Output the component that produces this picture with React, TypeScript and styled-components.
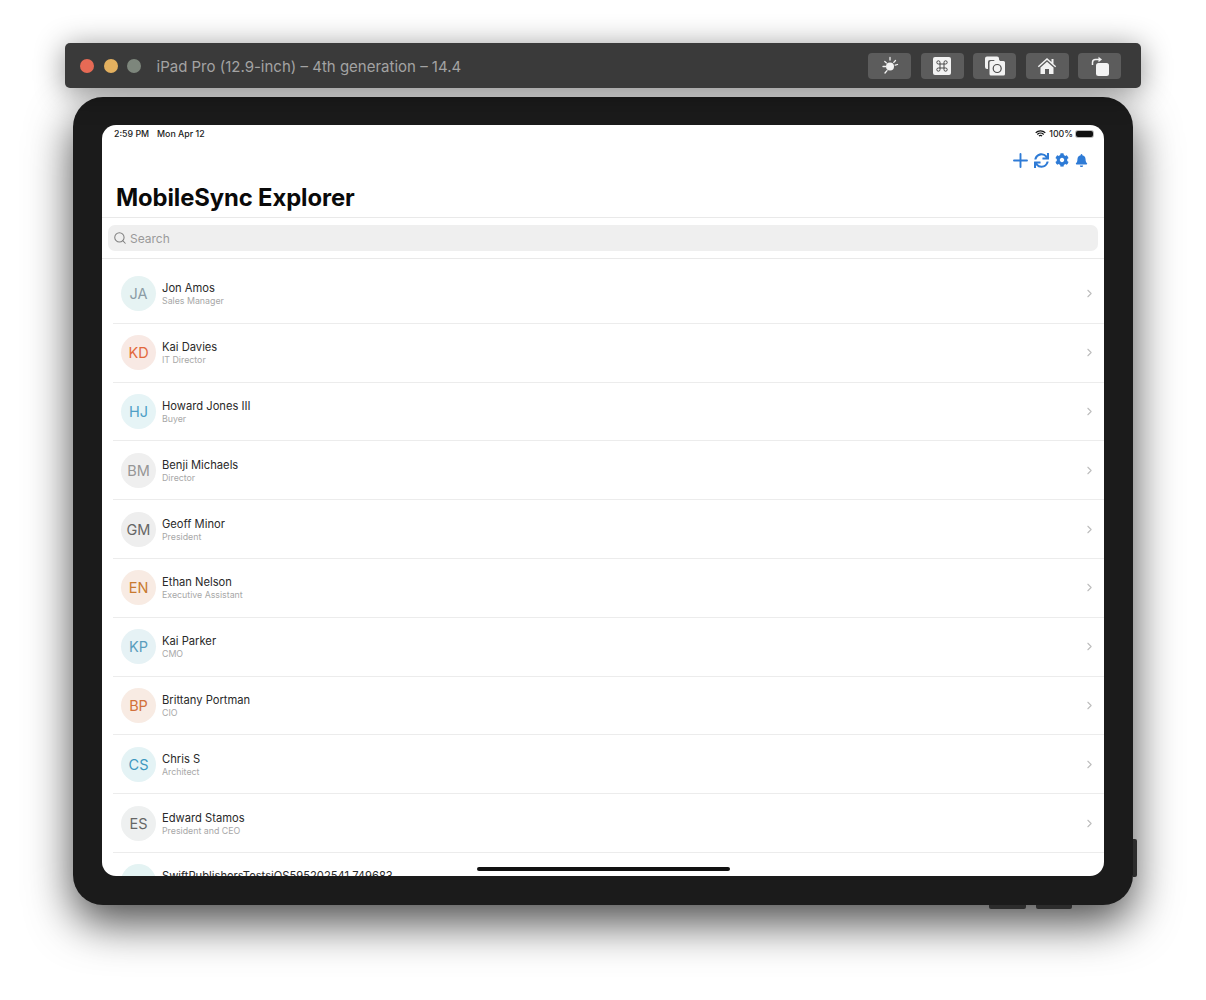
import React from 'react';
import styled, { createGlobalStyle } from 'styled-components';
import { FaBell, FaCog, FaSync } from 'react-icons/fa';
import { ChevronRight, Search } from 'lucide-react';

const contacts = [
  { initials: 'JA', name: 'Jon Amos', title: 'Sales Manager', bg: '#e6f3f3', fg: '#8b9ca6' },
  { initials: 'KD', name: 'Kai Davies', title: 'IT Director', bg: '#f8e9e4', fg: '#e2683c' },
  { initials: 'HJ', name: 'Howard Jones III', title: 'Buyer', bg: '#e6f4f6', fg: '#4f9fc6' },
  { initials: 'BM', name: 'Benji Michaels', title: 'Director', bg: '#efefef', fg: '#969696' },
  { initials: 'GM', name: 'Geoff Minor', title: 'President', bg: '#eeeeee', fg: '#666666' },
  { initials: 'EN', name: 'Ethan Nelson', title: 'Executive Assistant', bg: '#f8ebe3', fg: '#c87a30' },
  { initials: 'KP', name: 'Kai Parker', title: 'CMO', bg: '#e6f2f5', fg: '#5a9dbd' },
  { initials: 'BP', name: 'Brittany Portman', title: 'CIO', bg: '#f8ebe3', fg: '#d2703a' },
  { initials: 'CS', name: 'Chris S', title: 'Architect', bg: '#e4f3f5', fg: '#3e98c0' },
  { initials: 'ES', name: 'Edward Stamos', title: 'President and CEO', bg: '#eef0f0', fg: '#666666' },
  { initials: '', name: 'SwiftPublishersTestsiOS595202541.749683', title: '', bg: '#e4f3f3', fg: '#4f9fc6' },
];

const GlobalStyle = createGlobalStyle`
  html, body {
    margin: 0;
    background: #ffffff;
    font-family: Inter, "Liberation Sans", sans-serif;
  }
`;

const Page = styled.div`
  height: 1000px;
  padding: 43px 65px 0;
  box-sizing: border-box;
  overflow: hidden;
`;

const TitleBar = styled.header`
  position: relative;
  z-index: 1;
  height: 45px;
  display: flex;
  align-items: center;
  padding: 0 20px 0 15px;
  background: #3a3a3a;
  border-radius: 5px;
  box-shadow: 0 4px 30px rgba(0, 0, 0, 0.45);
`;

const Light = styled.span<{ $color: string }>`
  width: 14px;
  height: 14px;
  margin-right: 9.5px;
  border-radius: 50%;
  background: ${(p) => p.$color};
`;

const WindowTitle = styled.div`
  margin: 2px auto 0 6px;
  color: #a3a3a3;
  font-size: 15px;
`;

const ToolGroup = styled.div`
  display: flex;
  gap: 9.5px;
`;

const ToolButton = styled.div`
  width: 43px;
  height: 26px;
  display: flex;
  align-items: center;
  justify-content: center;
  background: #5c5c5c;
  border-radius: 4px;
`;

const Device = styled.div`
  position: relative;
  height: 808px;
  margin: 9px 8px 0;
  padding: 28px 29px 29px;
  box-sizing: border-box;
  background: #1b1b1b;
  border-radius: 30px;
  box-shadow: 0 18px 45px rgba(0, 0, 0, 0.7);
`;

const SideButton = styled.span`
  position: absolute;
  right: -4px;
  bottom: 28px;
  width: 4px;
  height: 38px;
  background: #2c2c2c;
  border-radius: 0 2px 2px 0;
`;

const BottomButton = styled.span<{ $right: number; $width: number }>`
  position: absolute;
  bottom: -4px;
  right: ${(p) => p.$right}px;
  width: ${(p) => p.$width}px;
  height: 4px;
  background: #2c2c2c;
  border-radius: 0 0 2px 2px;
`;

const Screen = styled.main`
  position: relative;
  height: 751px;
  overflow: hidden;
  background: #ffffff;
  border-radius: 14px;
`;

const StatusBar = styled.div`
  height: 17px;
  display: flex;
  align-items: center;
  justify-content: space-between;
  padding: 0 11px 0 12px;
  font-size: 8.8px;
  font-weight: 500;
  color: #222222;
`;

const StatusGroup = styled.div`
  display: flex;
  align-items: center;
  gap: 8px;
`;

const StatusRight = styled(StatusGroup)`
  gap: 3px;
`;

const Battery = styled.span`
  width: 17px;
  height: 6px;
  border-radius: 2px;
  background: #111111;
  box-shadow: 0 0 0 1px #bbbbbb;
`;

const NavActions = styled.div`
  height: 36px;
  display: flex;
  align-items: center;
  justify-content: flex-end;
  gap: 6px;
  padding: 0 16px 1px 0;
  color: #2e7bd6;
`;

const LargeTitle = styled.h1`
  margin: 0;
  padding: 0 14px;
  height: 39px;
  line-height: 38px;
  font-size: 23.8px;
  font-weight: 700;
  letter-spacing: -0.1px;
  color: #0a0a0a;
  border-bottom: 1px solid #e9e9e9;
  box-sizing: border-box;
`;

const SearchWrap = styled.div`
  padding: 7px 6px 7px;
  border-bottom: 1px solid #e9e9e9;
`;

const SearchField = styled.div`
  height: 26px;
  display: flex;
  align-items: center;
  gap: 3px;
  padding: 0 5px;
  background: #efefef;
  border-radius: 7px;
  color: #9a9a9a;
  font-size: 12px;
`;

const List = styled.ul`
  list-style: none;
  margin: 0;
  padding: 6px 0 0 11px;
`;

const Row = styled.li`
  height: 58.8px;
  box-sizing: border-box;
  display: flex;
  align-items: center;
  padding: 0 8px 0 8px;
  border-bottom: 1px solid #ececec;
`;

const Avatar = styled.div<{ $bg: string; $fg: string }>`
  width: 35px;
  height: 35px;
  flex: none;
  display: flex;
  align-items: center;
  justify-content: center;
  border-radius: 50%;
  background: ${(p) => p.$bg};
  color: ${(p) => p.$fg};
  font-size: 14.5px;
`;

const RowText = styled.div`
  margin: 0 auto 0 6px;
`;

const Name = styled.div`
  font-size: 11.2px;
  line-height: 14px;
  color: #2a2a2a;
`;

const JobTitle = styled.div`
  min-height: 11px;
  font-size: 8.8px;
  line-height: 11px;
  color: #a8a8a8;
`;

const HomeIndicator = styled.span`
  position: absolute;
  left: 375px;
  bottom: 5px;
  width: 253px;
  height: 4px;
  border-radius: 2px;
  background: #111111;
`;

function SunIcon() {
  return (
    <svg width="20" height="20" viewBox="0 0 20 20" fill="none" stroke="#f2f2f2" strokeWidth="1.3" strokeLinecap="round">
      <circle cx="10" cy="10.5" r="4" fill="#f2f2f2" stroke="none" />
      <path d="M10 1.5v2.5M3 10.5h2.8M15.500 4.500l-1.700 1.900M4.800 5.500l1.700 1.400M5 17l2-2.400M17.500 8.500l-2.300.7" />
    </svg>
  );
}

function CommandIcon() {
  return (
    <svg width="18" height="18" viewBox="0 0 18 18">
      <rect width="18" height="18" rx="2" fill="#f2f2f2" />
      <path
        d="M7 7h4v4H7zM7 7H5.400A1.600 1.600 0 1 1 7 5.400zM11 7V5.400A1.600 1.600 0 1 1 12.600 7zM11 11h1.600A1.600 1.600 0 1 1 11 12.600zM7 11v1.600A1.600 1.600 0 1 1 5.400 11z"
        fill="none"
        stroke="#4a4a4a"
        strokeWidth="1"
      />
    </svg>
  );
}

function ScreenshotIcon() {
  return (
    <svg width="22" height="22" viewBox="0 0 22 22">
      <path d="M3 1.500h10a2 2 0 0 1 2 2V5H6a2 2 0 0 0-2 2v7H3a2 2 0 0 1-2-2V3.500a2 2 0 0 1 2-2z" fill="#f2f2f2" />
      <path
        d="M7 6h3l1-1.500h4L16 6h3.500A1.500 1.500 0 0 1 21 7.500V19a1.500 1.500 0 0 1-1.500 1.500H7A1.500 1.500 0 0 1 5.500 19V7.500A1.500 1.500 0 0 1 7 6z"
        fill="#f2f2f2"
      />
      <circle cx="13.200" cy="13.500" r="4" fill="#f2f2f2" stroke="#4a4a4a" strokeWidth="1.200" />
    </svg>
  );
}

function HomeIcon() {
  return (
    <svg width="20" height="18" viewBox="0 0 20 18">
      <path d="M10 1 .8 9.300l1 1L10 3l8.200 7.300 1-1L16.500 6.900V2h-2v3.100z" fill="#f2f2f2" />
      <path d="M3.500 10.500 10 4.700l6.500 5.800V17H12v-5H8v5H3.500z" fill="#f2f2f2" />
    </svg>
  );
}

function RotateIcon() {
  return (
    <svg width="20" height="20" viewBox="0 0 20 20">
      <rect x="6" y="7" width="13" height="13" rx="2.500" fill="#f2f2f2" />
      <path d="M2.500 9V6.500a3 3 0 0 1 3-3H9" fill="none" stroke="#f2f2f2" strokeWidth="1.500" />
      <path d="M8.500.8 12 3.500 8.500 6.200z" fill="#f2f2f2" />
    </svg>
  );
}

function WifiIcon() {
  return (
    <svg width="11" height="8" viewBox="0 0 11 8" fill="none" stroke="#111111" strokeWidth="1.200">
      <path d="M.7 2.800a7 7 0 0 1 9.600 0M2.300 4.500a4.600 4.600 0 0 1 6.400 0M3.900 6.100a2.300 2.300 0 0 1 3.200 0" />
    </svg>
  );
}

function PlusIcon() {
  return (
    <svg width="15" height="15" viewBox="0 0 15 15" fill="none" stroke="currentColor" strokeWidth="1.900" strokeLinecap="round">
      <path d="M7.500 1v13M1 7.500h13" />
    </svg>
  );
}

export default function App() {
  return (
    <Page>
      <GlobalStyle />
      <TitleBar>
        <Light $color="#e66a55" />
        <Light $color="#e3b05f" />
        <Light $color="#7d867c" />
        <WindowTitle>iPad Pro (12.9-inch) – 4th generation – 14.4</WindowTitle>
        <ToolGroup>
          <ToolButton><SunIcon /></ToolButton>
          <ToolButton><CommandIcon /></ToolButton>
          <ToolButton><ScreenshotIcon /></ToolButton>
          <ToolButton><HomeIcon /></ToolButton>
          <ToolButton><RotateIcon /></ToolButton>
        </ToolGroup>
      </TitleBar>
      <Device>
        <SideButton />
        <BottomButton $right={107} $width={37} />
        <BottomButton $right={61} $width={36} />
        <Screen>
          <StatusBar>
            <StatusGroup>
              <span>2:59 PM</span>
              <span>Mon Apr 12</span>
            </StatusGroup>
            <StatusRight>
              <WifiIcon />
              <span>100%</span>
              <Battery />
            </StatusRight>
          </StatusBar>
          <NavActions>
            <PlusIcon />
            <FaSync size={15} />
            <FaCog size={14} />
            <FaBell size={13} />
          </NavActions>
          <LargeTitle>MobileSync Explorer</LargeTitle>
          <SearchWrap>
            <SearchField>
              <Search size={14} strokeWidth={1.8} color="#808080" />
              Search
            </SearchField>
          </SearchWrap>
          <List>
            {contacts.map((contact) => (
              <Row key={contact.name}>
                <Avatar $bg={contact.bg} $fg={contact.fg}>{contact.initials}</Avatar>
                <RowText>
                  <Name>{contact.name}</Name>
                  <JobTitle>{contact.title}</JobTitle>
                </RowText>
                <ChevronRight size={13} strokeWidth={2} color="#bdbdbd" />
              </Row>
            ))}
          </List>
          <HomeIndicator />
        </Screen>
      </Device>
    </Page>
  );
}
